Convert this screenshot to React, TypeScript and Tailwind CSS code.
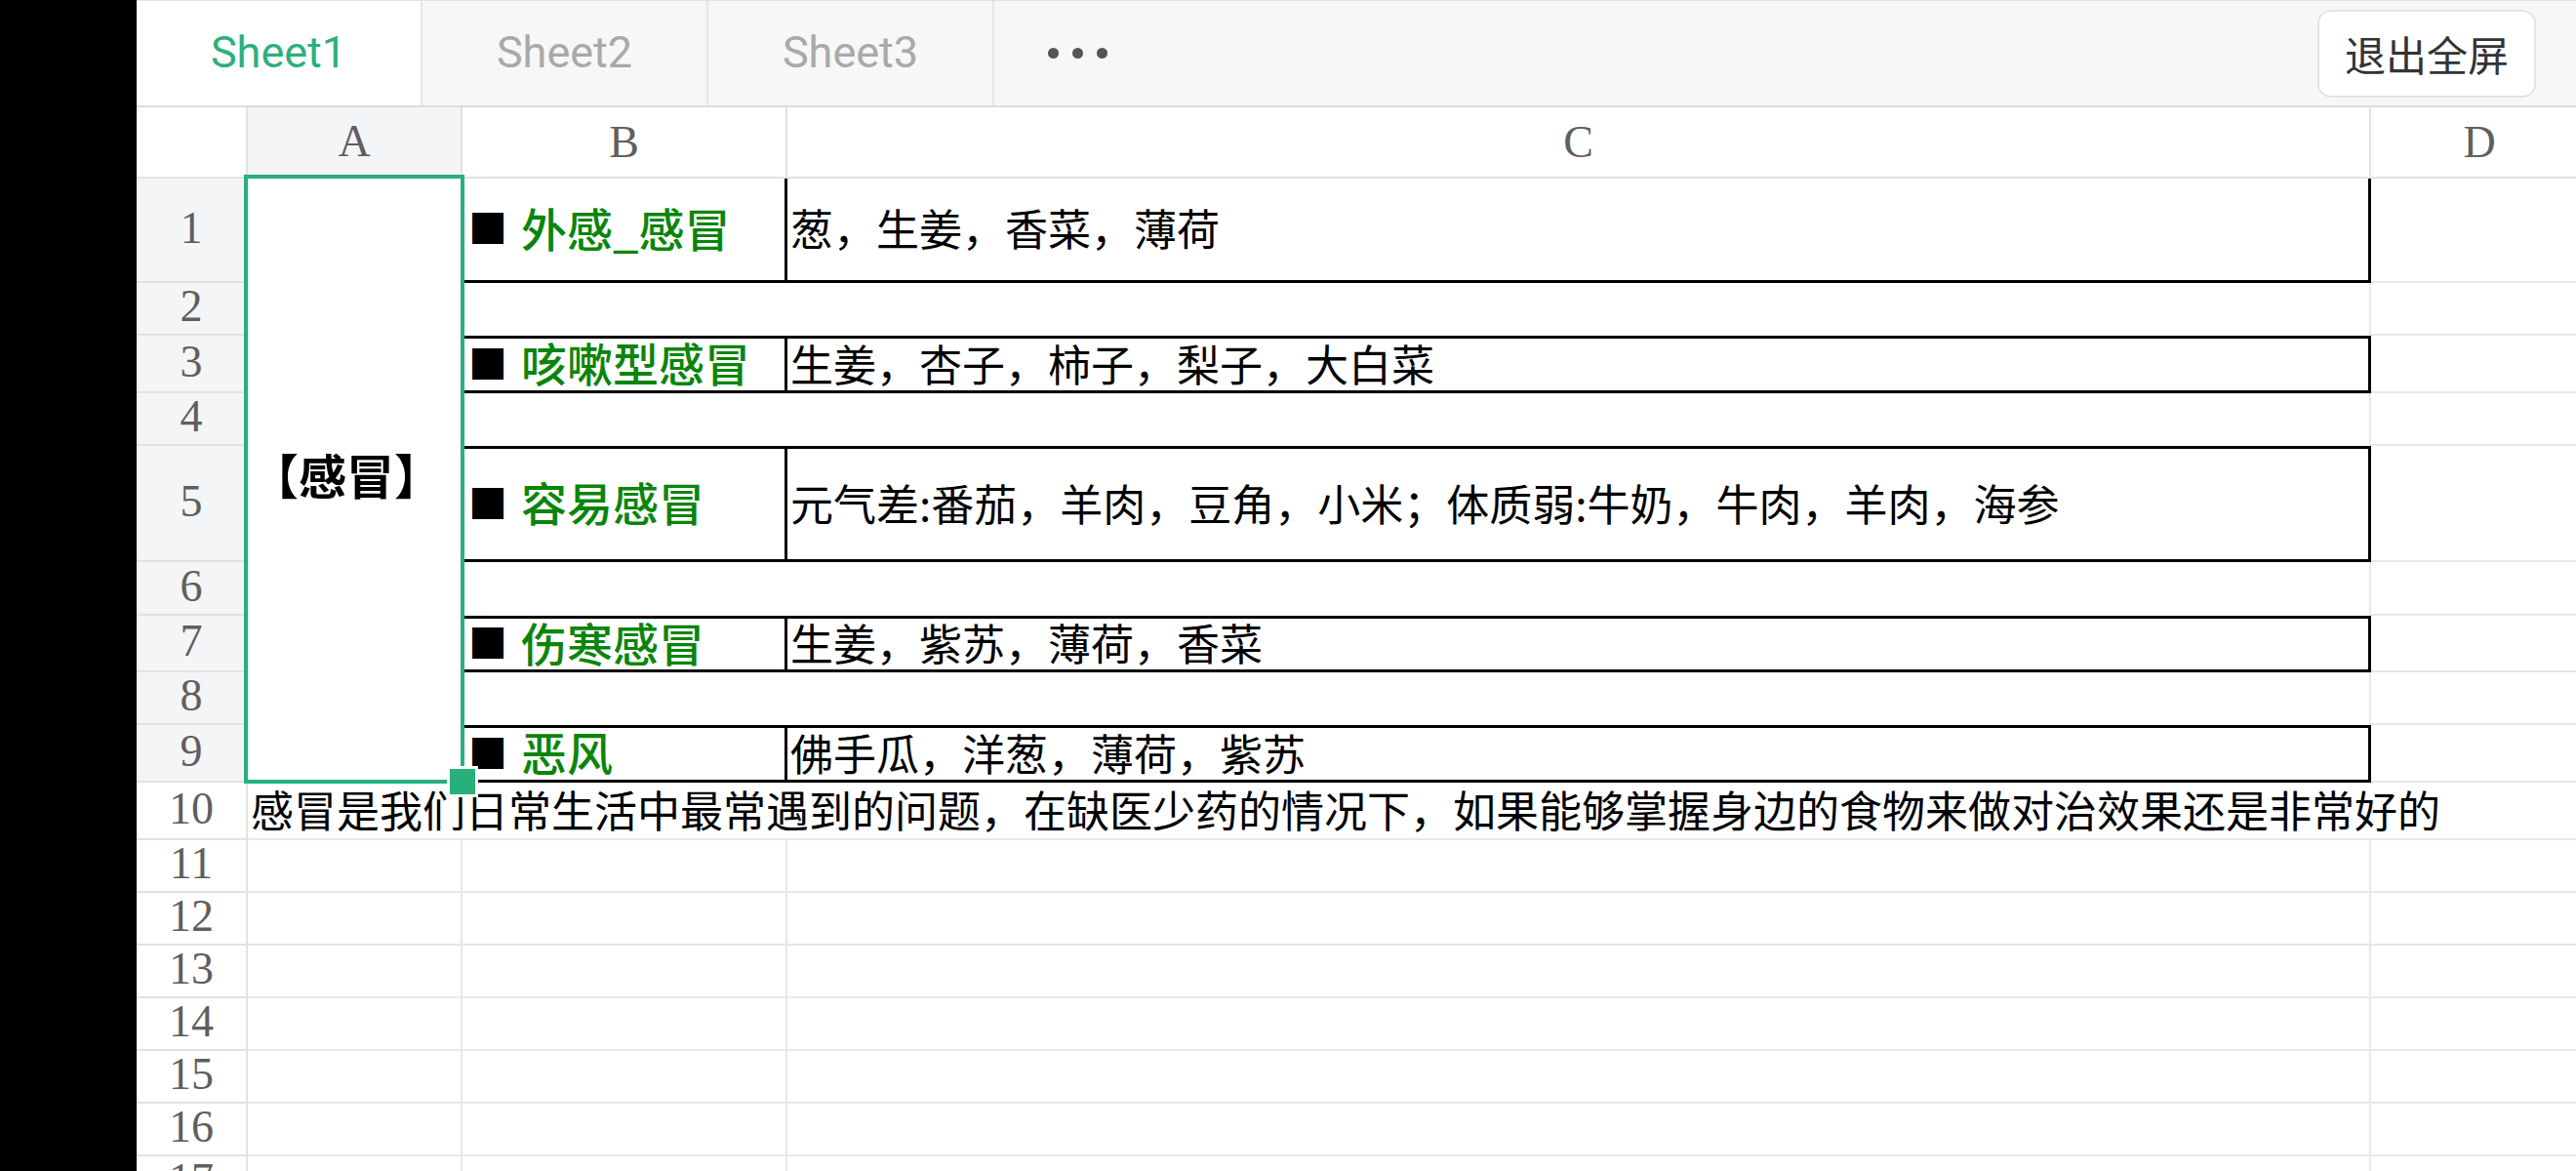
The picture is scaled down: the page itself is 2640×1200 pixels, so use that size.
import clsx from 'clsx';

const cjk = "[font-family:'Noto_Sans_CJK_SC',sans-serif]";
const serif = "[font-family:'Liberation_Serif',serif]";
const roboto = "[font-family:Roboto,'Noto_Sans_CJK_SC',sans-serif]";

type Entry = { label: string; foods: string } | null;

// rows 1..9 of columns B:C, null = blank spacer row
const entries: Entry[] = [
  { label: '外感_感冒', foods: '葱，生姜，香菜，薄荷' },
  null,
  { label: '咳嗽型感冒', foods: '生姜，杏子，柿子，梨子，大白菜' },
  null,
  {
    label: '容易感冒',
    foods: '元气差:番茄，羊肉，豆角，小米；体质弱:牛奶，牛肉，羊肉，海参',
  },
  null,
  { label: '伤寒感冒', foods: '生姜，紫苏，薄荷，香菜' },
  null,
  { label: '恶风', foods: '佛手瓜，洋葱，薄荷，紫苏' },
];

function TabBar() {
  const tabs = ['Sheet1', 'Sheet2', 'Sheet3'];
  return (
    <div className="flex h-[110px] shrink-0 items-stretch border-t border-b-2 border-t-[#e2e2e2] border-b-[#dcdcdc] bg-[#f7f7f7]">
      {tabs.map((t, i) => (
        <div
          key={t}
          className={clsx(
            'flex w-[293px] items-center justify-center border-r-2 border-[#e6e6e6] pb-[2px] text-[45px] leading-none',
            roboto,
            i === 0 ? 'bg-white text-[#2bb07c]' : 'text-[#a9a9a9]',
          )}
        >
          {t}
        </div>
      ))}
      <div className="ml-[55px] flex items-center gap-[14px]">
        {[0, 1, 2].map((i) => (
          <span key={i} className="h-[11px] w-[11px] rounded-full bg-[#555]" />
        ))}
      </div>
      <div
        className={clsx(
          'mt-[9px] mr-[41px] ml-auto flex h-[90px] w-[224px] items-center justify-center self-start rounded-[14px] border-2 border-[#e4e4e4] bg-white text-[42px] leading-none text-[#333]',
          cjk,
        )}
      >
        退出全屏
      </div>
    </div>
  );
}

function RowHead({ n }: { n: number }) {
  return (
    <div
      className={clsx(
        'flex items-center justify-center border-r-2 border-b-2 border-[#e2e2e2] pb-[4px] text-[46px] leading-none text-[#5f5f5f]',
        serif,
        n <= 9 ? 'bg-[#f4f5f7]' : 'bg-white',
      )}
    >
      {n}
    </div>
  );
}

function Sheet() {
  const rows = Array.from({ length: 17 }, (_, i) => i + 1);
  return (
    <div className="grid min-h-0 flex-1 grid-cols-[114px_220px_333px_1623px_1fr] grid-rows-[73px_107px_54px_59px_54px_119px_55px_58px_54px_59px_59px_54px_54px_54px_54px_54px_54px_54px] overflow-hidden bg-white">
      {/* column headers */}
      <div className="border-r-2 border-b-2 border-[#e2e2e2]" />
      <div
        className={clsx(
          'flex items-center justify-center border-r-2 border-b-4 border-r-[#e2e2e2] border-b-[#27b07a] bg-[#f4f5f7] text-[46px] leading-none text-[#5f5f5f]',
          serif,
        )}
      >
        A
      </div>
      {['B', 'C', 'D'].map((c) => (
        <div
          key={c}
          className={clsx(
            'flex items-center justify-center border-b-2 border-[#e2e2e2] text-[46px] leading-none text-[#5f5f5f]',
            c !== 'D' ? 'border-r-2' : 'pl-[12px]',
            serif,
          )}
        >
          {c}
        </div>
      ))}

      {rows.map((n) => {
        const cells = [<RowHead key="h" n={n} />];

        if (n === 1) {
          cells.push(
            <div
              key="a"
              className={clsx(
                'relative z-10 row-span-9 flex items-center justify-center pr-[18px] pb-[14px] text-[49px] leading-none font-semibold text-black',
                cjk,
              )}
            >
              【感冒】
              <div className="pointer-events-none absolute -top-[4px] -right-[2px] -bottom-[1px] -left-[4px] border-4 border-[#27b07a]" />
              <div className="absolute -right-[16px] -bottom-[15px] h-[32px] w-[32px] border-[3px] border-white bg-[#27b07a]" />
            </div>,
          );
        } else if (n === 10) {
          cells.push(
            <div
              key="a"
              className={clsx(
                'flex items-center overflow-visible border-b-2 border-[#e8e8e8] pb-[3px] pl-[3px] text-[44px] leading-none whitespace-nowrap text-black',
                cjk,
              )}
            >
              感冒是我们日常生活中最常遇到的问题，在缺医少药的情况下，如果能够掌握身边的食物来做对治效果还是非常好的
            </div>,
          );
        } else if (n > 10) {
          cells.push(
            <div key="a" className="border-r-2 border-b-2 border-[#e8e8e8]" />,
          );
        }

        if (n <= 9) {
          const e = entries[n - 1];
          if (e) {
            const top = n > 1;
            cells.push(
              <div
                key="b"
                className={clsx(
                  'flex items-center border-r-[3px] border-b-[3px] border-black pb-[6px] pl-[6px] leading-none',
                  top && 'border-t-[3px]',
                  cjk,
                )}
              >
                <span className="text-[40px] text-black">■</span>
                <span className="ml-[14px] text-[47px] font-medium text-[#0a850a]">
                  {e.label}
                </span>
              </div>,
              <div
                key="c"
                className={clsx(
                  'flex items-center border-r-[3px] border-b-[3px] border-black pb-[4px] pl-[3px] text-[44px] leading-none whitespace-nowrap text-black',
                  top && 'border-t-[3px]',
                  cjk,
                )}
              >
                {e.foods}
              </div>,
            );
          } else {
            cells.push(
              <div key="bc" className="col-span-2 border-r-2 border-[#e8e8e8]" />,
            );
          }
        } else if (n === 10) {
          cells.push(
            <div key="b" className="border-b-2 border-[#e8e8e8]" />,
            <div key="c" className="border-b-2 border-[#e8e8e8]" />,
          );
        } else {
          cells.push(
            <div key="b" className="border-r-2 border-b-2 border-[#e8e8e8]" />,
            <div key="c" className="border-r-2 border-b-2 border-[#e8e8e8]" />,
          );
        }

        cells.push(<div key="d" className="border-b-2 border-[#e8e8e8]" />);
        return cells;
      })}
    </div>
  );
}

export default function App() {
  return (
    <div className="flex h-[1200px] w-[2640px] overflow-hidden bg-black">
      <div className="w-[140px] shrink-0 bg-black" />
      <div className="flex min-w-0 flex-1 flex-col bg-white">
        <TabBar />
        <Sheet />
      </div>
    </div>
  );
}
